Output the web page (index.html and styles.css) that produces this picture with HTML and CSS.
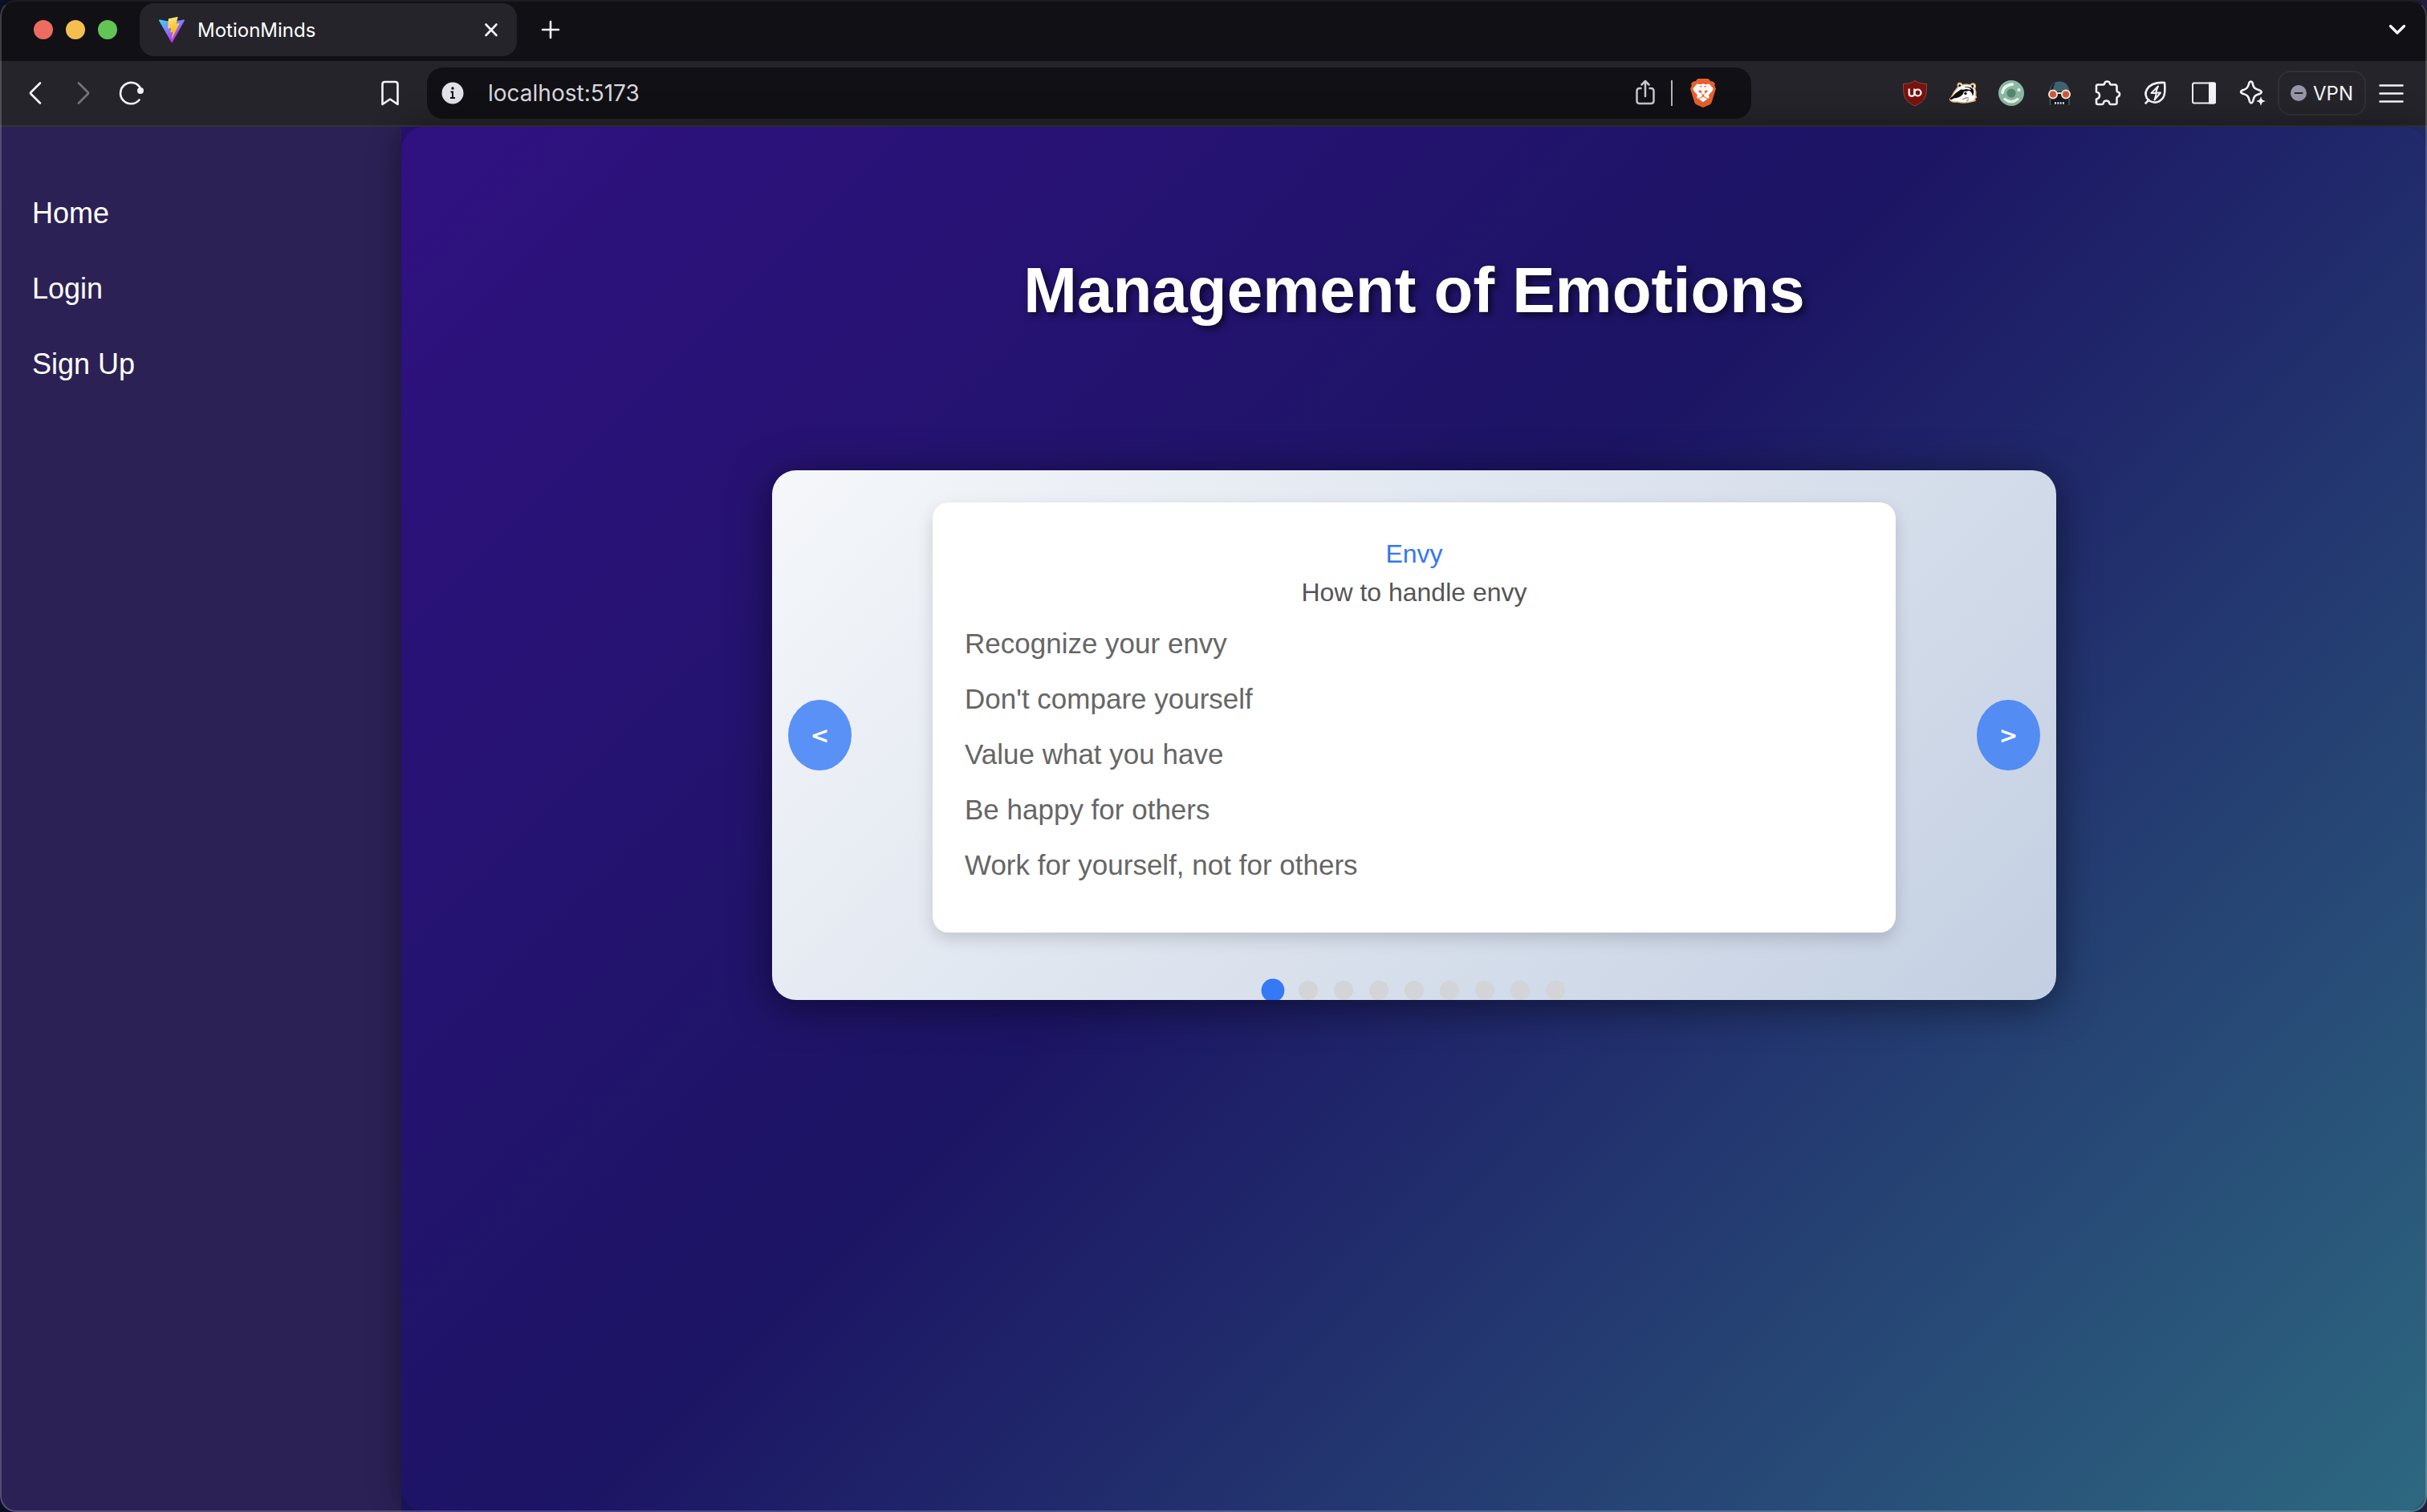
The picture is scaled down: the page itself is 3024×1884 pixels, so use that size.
FILE: index.html
```html
<!DOCTYPE html>
<html lang="en">
<head>
<meta charset="utf-8">
<title>MotionMinds</title>
<link rel="stylesheet" href="styles.css">
</head>
<body>
<div class="window">
  <header class="tabstrip">
    <div class="lights">
      <button class="light light-close" aria-label="Close window"></button>
      <button class="light light-min" aria-label="Minimize window"></button>
      <button class="light light-zoom" aria-label="Zoom window"></button>
    </div>
    <div class="tab">
      <svg class="favicon" viewBox="0 0 32 32" aria-hidden="true">
        <defs>
          <linearGradient id="vite-a" x1="0" y1="0.05" x2="0.6" y2="0.85"><stop offset="0" stop-color="#41d1ff"/><stop offset="1" stop-color="#bd34fe"/></linearGradient>
          <linearGradient id="vite-b" x1="0.4" y1="0" x2="0.6" y2="1"><stop offset="0" stop-color="#ffea83"/><stop offset="0.3" stop-color="#fbd250"/><stop offset="1" stop-color="#ffa800"/></linearGradient>
        </defs>
        <path fill="url(#vite-a)" d="M31.9 4.8 16.8 31.6c-.3.5-1.1.5-1.4 0L.1 4.8c-.4-.6.2-1.3.9-1.2l15 2.7 15-2.7c.7-.1 1.3.6.9 1.2z"/>
        <path fill="url(#vite-b)" d="m23.2.1-11.1 2.1c-.2 0-.3.2-.3.4l-.7 11.6c0 .3.2.5.5.4l3.1-.7c.3-.1.6.2.5.5l-.9 4.5c-.1.3.2.6.5.5l1.9-.6c.3-.1.6.2.5.5l-1.5 7c-.1.4.5.7.8.3l.1-.2 9-18c.2-.3-.1-.7-.4-.6l-3.2.6c-.3.1-.6-.2-.5-.5l2.100-7.200c.1-.3-.1-.6-.4-.6z"/>
      </svg>
      <span class="tab-title">MotionMinds</span>
      <button class="icon-button tab-close" aria-label="Close tab">
        <svg viewBox="0 0 40 40"><path class="stroke" d="m13.500 13.500 13 13.500M26.500 13.500 13.500 27"/></svg>
      </button>
    </div>
    <button class="icon-button new-tab" aria-label="New tab">
      <svg viewBox="0 0 40 40"><path class="stroke" d="M20 10v20M10 20h20"/></svg>
    </button>
    <button class="icon-button tab-search" aria-label="Search tabs">
      <svg viewBox="0 0 40 40"><path class="stroke thick" d="m11.500 15.500 8.500 8.500 8.500-8.500"/></svg>
    </button>
  </header>

  <div class="toolbar">
    <div class="nav-tools">
      <button class="icon-button" aria-label="Back"><svg viewBox="0 0 40 40"><path class="stroke" d="M26 7.500 14.500 19q-1 1 0 2L26 32.500"/></svg></button>
      <button class="icon-button dim" aria-label="Forward"><svg viewBox="0 0 40 40"><path class="stroke" d="M14 7.500 25.500 19q1 1 0 2L14 32.500"/></svg></button>
      <button class="icon-button" aria-label="Reload"><svg viewBox="0 0 40 40"><path class="stroke" d="M31 14A13.200 13.200 0 1 0 29.500 28.500"/><circle class="fill" cx="31" cy="17" r="4"/></svg></button>
      <button class="icon-button push" aria-label="Bookmark"><svg viewBox="0 0 40 40"><path class="stroke" d="M10.500 34V9q0-3 3-3h13q3 0 3 3v25L20 27.500z"/></svg></button>
    </div>
    <div class="address">
      <svg class="info" viewBox="0 0 28 28" aria-hidden="true"><circle cx="14" cy="14" r="13.500" fill="#e2e0e8"/><circle cx="14" cy="8" r="1.700" fill="#111015"/><path d="M11.500 12.500H14v7.500M11 20h6" fill="none" stroke="#111015" stroke-width="2"/></svg>
      <input class="url" type="text" value="localhost:5173" aria-label="Address">
      <button class="icon-button" aria-label="Share"><svg viewBox="0 0 40 40"><g fill="none" stroke="#c6c5cd" stroke-width="2.500" stroke-linecap="round" stroke-linejoin="round"><path d="M14.500 14H13q-3.500 0-3.500 3.500v12q0 3.500 3.500 3.500h14q3.500 0 3.500-3.500v-12q0-3.500-3.500-3.500h-1.500"/><path d="M20 24V5.500M15.500 9.500l4.500-4.500 4.500 4.500"/></g></svg></button>
      <span class="divider"></span>
      <button class="icon-button" aria-label="Brave Shields"><svg viewBox="0 0 40 40">
        <path fill="#e9602c" d="M13.500 2h13l3 3.300c2-.6 4.500.8 5.500 3.200l-1 2 2 4-5.500 17.500q-.5 1.500-2 2.300L20 38l-8.500-3.700q-1.500-.8-2-2.300L4 14.500l2-4-1-2c1-2.400 3.500-3.800 5.500-3.200z"/>
        <path fill="#fff" d="M12.500 8.500 17 9.300l3-1 3 1 4.500-.8 5 5.500-.8 3-4.700 5.500.8 3-1.300 1.500-4-2.300-1.500-1 .5-3 4.500-2.700-1-1.500-4.500.8.500-4 4-2-3.500-.3-1.500 1-1.500-1-3.500.3 4 2 .5 4-4.500-.8-1 1.500 4.500 2.700.5 3-1.500 1-4 2.300-1.300-1.500.8-3L8.300 17l-.8-3z"/>
        <path fill="#fff" d="m20 24.500 5.300 2.700-5.300 4-5.300-4z"/><path fill="#fff" d="M18.500 11h3l.5 9-2 2-2-2z"/>
      </svg></button>
    </div>
    <div class="extensions">
      <button class="icon-button" aria-label="uBlock Origin"><svg viewBox="0 0 40 40"><path fill="#7a120d" stroke="#8a4a48" stroke-width="1" d="M20 4.500c4 3 9 4 14.500 4 0 14 0 21-14.500 27.500C5.500 29.500 5.500 22.500 5.500 8.500 11 8.500 16 7.500 20 4.500z"/><g fill="none" stroke="#fff" stroke-width="2.200"><path d="M12.700 14.500v6q0 3.300 3.300 3.300t3.300-3.300v-6"/><circle cx="23.500" cy="19.500" r="4"/></g></svg></button>
      <button class="icon-button" aria-label="Privacy Badger"><svg viewBox="0 0 40 40">
        <path fill="#fff" stroke="#e7b97e" stroke-width="1.500" d="M14 12q-2-3 1-4.500 3-.5 4 2.500 5-1.500 10 0 2-3 5-1.500 2.500 2 .5 5.500 2 5 1 9l1 2-2 2 .5 2.500-4 1Q22 33 13 31q-7 .5-9-2-1-2 1-3.500 4-8 9-13.500z"/>
        <path fill="#111" d="M15 12.500q-1.500-2 0-3.500 2 0 2.700 2zM30 11q1-2.500 3-1 1 2-1 4zM7 24q4-5 8-7l8-5q8 0 10 4 1 4-1 8-1-6-5-7-5 1-7 4-3 4-8 5-4 0-6 2-3 1-2-2z"/>
        <path fill="#fff" d="M20 13q8-1 10 3l-6-1-6 1z"/>
        <circle cx="23" cy="20.500" r="2.800" fill="#fff"/><circle cx="23" cy="20.500" r="1.700" fill="#111"/><path d="M19 28q4-3 8-2M24 30l3-2" stroke="#666" fill="none"/>
      </svg></button>
      <button class="icon-button" aria-label="Green circle extension"><svg viewBox="0 0 40 40"><circle cx="20" cy="20" r="16" fill="#8ab8a2"/><circle cx="20" cy="20" r="5.500" fill="#568570"/><g fill="none" stroke="#e9f5ec" stroke-width="3.500" stroke-linecap="round"><path d="M9 19.500q1-9 12.500-10.500M12 27.500q8 6.500 16 0"/></g><circle cx="29.500" cy="16" r="2" fill="#e9f5ec"/></svg></button>
      <button class="icon-button" aria-label="Skull extension"><svg viewBox="0 0 40 40"><path fill="#14191d" d="M8 17h24v17H8z"/><path fill="#3c6470" d="M7.500 18Q9 5.500 20 5.500T32.500 18z"/><path fill="#14191d" d="M9 16q2-8 6-9-3 4-3 9z"/><path stroke="#3c6470" stroke-width="1.500" d="M8.500 27v8M32 27v8"/><g fill="#c8593f" stroke="#f6ddd4" stroke-width="2"><circle cx="12" cy="21.500" r="5"/><circle cx="28" cy="21.500" r="5"/></g><path stroke="#f6ddd4" stroke-width="2" d="M17 20h6"/><path stroke="#d9eef2" stroke-width="2.500" stroke-dasharray="2 1.300" d="M14 32.500h12"/></svg></button>
      <button class="icon-button" aria-label="Extensions"><svg viewBox="0 0 40 40"><path class="stroke" d="M8 9.500h6c1.500 0 2-.5 2.200-1.500.4-2 1.800-2.500 3.300-2.500s2.900.5 3.300 2.500c.2 1 .7 1.500 2.200 1.500h4q2.500 0 2.500 2.500v4.500c0 1 .3 1.700 1.300 2 1.600.5 2.200 1.700 2.200 3s-.6 2.500-2.200 3c-1 .3-1.300 1-1.300 2V32q0 2-2 2h-5.500c-1 0-1.500-.4-1.700-1.300-.4-2-1.800-3.200-3.800-3.200s-3.400 1.200-3.800 3.200c-.2.900-.7 1.300-1.700 1.300H8q-2 0-2-2v-4.500c2.500-.5 4-2.500 4-4.500S8.500 19 6 18.500v-7q0-2 2-2z"/></svg></button>
      <button class="icon-button" aria-label="Energy saver"><svg viewBox="0 0 40 40"><path class="stroke" d="m7.500 32.500 4-4M11 29Q5 22.500 9 15.500 14.500 6 31 7q1.500 14-2 19-7.500 9.500-18 3z"/><path class="stroke slim" d="m23 11.500-8.500 8.500H21l-2.500 8.500 7.500-9h-6z"/></svg></button>
      <button class="icon-button" aria-label="Side panel"><svg viewBox="0 0 40 40"><path class="stroke slim" d="M8 7.500h24q2 0 2 2v21q0 2-2 2H8q-2 0-2-2v-21q0-2 2-2z"/><path class="fill" d="M26 6.500h7q2 0 2 2v23q0 2-2 2h-7z"/></svg></button>
      <button class="icon-button" aria-label="Leo AI"><svg viewBox="0 0 40 40"><path class="stroke" d="M16.500 7q2-3 4 0c1 6 2 7 9 9.500q4 2 1 4l-4 1.500c-3 1-4 2-5.500 8.500q-2 4-4 0c-1.500-7-2.500-8-9-10q-4-2 0-4c6-2 7-3.500 8.500-9.500z"/><path class="fill cut" d="m31 23 2 5 5 2-5 2-2 5-2-5-5-2 5-2z"/></svg></button>
    </div>
    <button class="vpn"><svg class="vpn-dot" viewBox="0 0 20 20" aria-hidden="true"><circle cx="10" cy="10" r="10" fill="#9795a8"/><path d="M5.500 10h9" stroke="#25242a" stroke-width="2" stroke-linecap="round"/></svg>VPN</button>
    <button class="icon-button" aria-label="Menu"><svg viewBox="0 0 40 40"><path class="stroke" d="M6.500 10.500h28M6.500 20.500h28M6.500 30.500h28"/></svg></button>
  </div>

  <div class="page">
    <nav class="sidebar">
      <a href="#home">Home</a>
      <a href="#login">Login</a>
      <a href="#signup">Sign Up</a>
    </nav>
    <main class="content">
      <h1>Management of Emotions</h1>
      <section class="carousel" aria-label="Emotions">
        <article class="slide">
          <h2>Envy</h2>
          <p>How to handle envy</p>
          <ul>
            <li>Recognize your envy</li>
            <li>Don't compare yourself</li>
            <li>Value what you have</li>
            <li>Be happy for others</li>
            <li>Work for yourself, not for others</li>
          </ul>
        </article>
        <div class="dots">
          <button class="dot active" aria-label="Slide 1"></button>
          <button class="dot" aria-label="Slide 2"></button>
          <button class="dot" aria-label="Slide 3"></button>
          <button class="dot" aria-label="Slide 4"></button>
          <button class="dot" aria-label="Slide 5"></button>
          <button class="dot" aria-label="Slide 6"></button>
          <button class="dot" aria-label="Slide 7"></button>
          <button class="dot" aria-label="Slide 8"></button>
          <button class="dot" aria-label="Slide 9"></button>
        </div>
        <button class="arrow prev" aria-label="Previous slide">&lt;</button>
        <button class="arrow next" aria-label="Next slide">&gt;</button>
      </section>
    </main>
  </div>
</div>
</body>
</html>
```
FILE: styles.css
```css
* { box-sizing: border-box; }

body {
  margin: 0;
  background: linear-gradient(90deg, #0c0f22 50%, #231d3d 50%);
  font-family: "Liberation Sans", Arial, sans-serif;
}

button {
  padding: 0;
  border: 0;
  background: none;
  color: inherit;
  font: inherit;
}

.window {
  position: relative;
  display: flex;
  flex-direction: column;
  min-height: 100vh;
  overflow: hidden;
  border-radius: 20px;
}

/* hairline highlight round the window frame */
.window::after {
  content: "";
  position: absolute;
  inset: 0;
  z-index: 5;
  border: 2px solid rgba(255, 255, 255, 0.2);
  border-top-color: rgba(255, 255, 255, 0.05);
  border-radius: 20px;
  pointer-events: none;
}

/* browser chrome */
.tabstrip {
  display: flex;
  align-items: center;
  height: 76px;
  padding: 0 17px 2px 42px;
  background: #111015;
  color: #fff;
  font-family: Inter, sans-serif;
}

.lights { display: flex; gap: 16px; }
.light { width: 24px; height: 24px; border-radius: 50%; }
.light-close { background: #ed6b60; }
.light-min { background: #f5bf4f; }
.light-zoom { background: #61c554; }

.tab {
  display: flex;
  align-items: center;
  width: 470px;
  height: 66px;
  margin-left: 28px;
  padding: 0 12px 0 24px;
  border-radius: 18px;
  background: #25242a;
}

.favicon { width: 32px; height: 32px; }
.tab-title { margin-left: 16px; font-size: 24px; }
.tab-close { margin-left: auto; }
.new-tab { margin-left: 22px; }
.tab-search { margin-left: auto; }

.icon-button { flex: none; width: 40px; height: 40px; color: #f4f3f8; }
.icon-button svg { display: block; width: 100%; height: 100%; }
.dim { color: #75747a; }

.stroke {
  fill: none;
  stroke: currentColor;
  stroke-width: 2.6;
  stroke-linecap: round;
  stroke-linejoin: round;
}
.thick { stroke-width: 3.4; }
.slim { stroke-width: 2; }
.fill { fill: currentColor; }
.cut { stroke: #25242a; stroke-width: 1; }

.toolbar {
  display: flex;
  align-items: center;
  height: 82px;
  padding-right: 25px;
  border-bottom: 2px solid #343338;
  background: #25242a;
  color: #f4f3f8;
  font-family: Inter, sans-serif;
}

.nav-tools {
  display: flex;
  flex: 0 0 532px;
  gap: 20px;
  padding: 0 26px 0 24px;
}
.push { margin-left: auto; }

.address {
  display: flex;
  flex: 1;
  align-items: center;
  height: 64px;
  margin-right: 184px;
  padding: 0 40px 0 18px;
  border-radius: 20px;
  background: #111015;
}
.info { width: 28px; height: 28px; margin-right: 30px; }
.url {
  flex: 1;
  min-width: 0;
  padding: 0;
  border: 0;
  background: none;
  color: #d8d7de;
  font: 28px Inter, sans-serif;
}
.divider { width: 2px; height: 32px; margin: 0 18px 0 12px; background: #b4b3bb; }

.extensions { display: flex; gap: 20px; }

.vpn {
  display: flex;
  align-items: center;
  justify-content: center;
  gap: 8px;
  width: 110px;
  height: 56px;
  margin: 0 11px 0 12px;
  border: 2px solid #303036;
  border-radius: 16px;
  font-size: 24px;
}
.vpn-dot { width: 20px; height: 20px; }

/* page */
.page {
  display: flex;
  flex: 1;
  background: linear-gradient(135deg, #301181 0%, #1c1464 45%, #2d6880 100%);
}

.sidebar {
  display: flex;
  flex: 0 0 500px;
  flex-direction: column;
  align-items: flex-start;
  gap: 50px;
  padding: 86px 40px;
  background: #2c2155;
}
.sidebar a {
  color: #fff;
  font-size: 36px;
  line-height: 44px;
  text-decoration: none;
}

.content {
  display: flex;
  flex: 1;
  flex-direction: column;
  align-items: center;
  gap: 178px;
  padding: 158px 40px 80px;
  border-radius: 30px;
  background: linear-gradient(135deg, #301181 0%, #1c1464 45%, #2d6880 100%);
  box-shadow: 0 0 40px rgba(0, 0, 0, 0.4);
}

h1 {
  margin: 0;
  color: #fff;
  font-size: 80px;
  line-height: 92px;
  text-shadow: 4px 4px 8px rgba(0, 0, 0, 0.6);
}

.carousel {
  position: relative;
  width: 100%;
  max-width: 1600px;
  padding-top: 40px;
  border-radius: 30px;
  overflow: hidden;
  background: linear-gradient(135deg, #f5f7fa 0%, #c3cfe2 100%);
  box-shadow: 0 8px 50px rgba(0, 0, 0, 0.5);
}

.slide {
  width: 75%;
  margin: 0 auto;
  padding: 40px 40px 50px;
  border-radius: 20px;
  background: #fff;
  box-shadow: 0 8px 20px rgba(0, 0, 0, 0.15);
}
.slide h2,
.slide p {
  margin: 0;
  font-size: 32px;
  font-weight: 400;
  line-height: 48px;
  text-align: center;
}
.slide h2 { color: #3578f0; }
.slide p { color: #555; }
.slide ul { margin: 5px 0 0; padding: 0; list-style: none; }
.slide li { color: #666; font-size: 35px; line-height: 69px; }

.dots {
  display: flex;
  justify-content: center;
  gap: 20px;
  margin-top: 60px;
}
.dot { width: 24px; height: 24px; border-radius: 50%; background: #d2d4d8; }
.dot.active { background: #3579f6; transform: scale(1.2); }

.arrow {
  position: absolute;
  top: 50%;
  width: 79px;
  height: 88px;
  border-radius: 50%;
  background: rgba(53, 121, 246, 0.8);
  color: #fff;
  font: 700 28px "DejaVu Sans", sans-serif;
  transform: translateY(-50%);
}
.prev { left: 20px; }
.next { right: 20px; }
```
